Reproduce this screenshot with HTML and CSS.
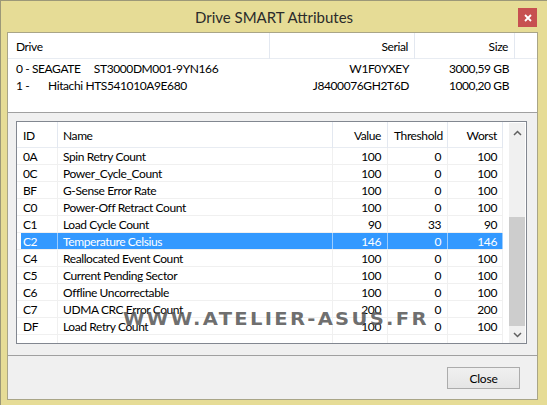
FILE: index.html
```html
<!DOCTYPE html>
<html lang="en">
<head>
  <meta charset="UTF-8">
  <title>Drive SMART Attributes</title>
  <link rel="stylesheet" href="styles.css">
</head>
<body>
  <div class="window">
    <div class="titlebar">
      <div></div>
      <div class="title">Drive SMART Attributes</div>
      <div class="close-x">
        <svg width="8" height="8" viewBox="0 0 8 8"><path d="M1 1 L7 7 M7 1 L1 7" stroke="#fff" stroke-width="1.8" fill="none"/></svg>
      </div>
    </div>

    <div class="client">
      <div class="main">
        <div class="drives">
          <div class="drv-head">
            <div class="dh">Drive</div>
            <div class="dh right">Serial</div>
            <div class="dh right">Size</div>
            <div class="dh last"></div>
          </div>
          <div class="drv-row">
            <div class="dc pre">0 - SEAGATE     ST3000DM001-9YN166</div>
            <div class="dc right">W1F0YXEY</div>
            <div class="dc right">3000,59 GB</div>
          </div>
          <div class="drv-row">
            <div class="dc pre">1 -       Hitachi HTS541010A9E680</div>
            <div class="dc right">J8400076GH2T6D</div>
            <div class="dc right">1000,20 GB</div>
          </div>
        </div>

        <div class="smart-wrap">
          <div class="smart">
            <div class="grid">
              <div class="row head">
                <div class="c">ID</div>
                <div class="c">Name</div>
                <div class="c num">Value</div>
                <div class="c num">Threshold</div>
                <div class="c num">Worst</div>
              </div>
              <div class="row"><div class="c">0A</div><div class="c">Spin Retry Count</div><div class="c num">100</div><div class="c num">0</div><div class="c num">100</div></div>
              <div class="row"><div class="c">0C</div><div class="c">Power_Cycle_Count</div><div class="c num">100</div><div class="c num">0</div><div class="c num">100</div></div>
              <div class="row"><div class="c">BF</div><div class="c">G-Sense Error Rate</div><div class="c num">100</div><div class="c num">0</div><div class="c num">100</div></div>
              <div class="row"><div class="c">C0</div><div class="c">Power-Off Retract Count</div><div class="c num">100</div><div class="c num">0</div><div class="c num">100</div></div>
              <div class="row"><div class="c">C1</div><div class="c">Load Cycle Count</div><div class="c num">90</div><div class="c num">33</div><div class="c num">90</div></div>
              <div class="row sel"><div class="c">C2</div><div class="c">Temperature Celsius</div><div class="c num">146</div><div class="c num">0</div><div class="c num">146</div></div>
              <div class="row"><div class="c">C4</div><div class="c">Reallocated Event Count</div><div class="c num">100</div><div class="c num">0</div><div class="c num">100</div></div>
              <div class="row"><div class="c">C5</div><div class="c">Current Pending Sector</div><div class="c num">100</div><div class="c num">0</div><div class="c num">100</div></div>
              <div class="row"><div class="c">C6</div><div class="c">Offline Uncorrectable</div><div class="c num">100</div><div class="c num">0</div><div class="c num">100</div></div>
              <div class="row"><div class="c">C7</div><div class="c">UDMA CRC Error Count</div><div class="c num">200</div><div class="c num">0</div><div class="c num">200</div></div>
              <div class="row"><div class="c">DF</div><div class="c">Load Retry Count</div><div class="c num">100</div><div class="c num">0</div><div class="c num">100</div></div>
              <div class="row rest"><div class="c"></div><div class="c"></div><div class="c"></div><div class="c"></div><div class="c"></div></div>
            </div>
            <div class="scrollbar">
              <div class="sb-btn up">
                <svg width="9" height="6" viewBox="0 0 9 6"><path d="M1 5 L4.5 1.5 L8 5" stroke="#606060" stroke-width="1.5" fill="none"/></svg>
              </div>
              <div class="sb-track"><div class="sb-thumb"></div></div>
              <div class="sb-btn down">
                <svg width="9" height="6" viewBox="0 0 9 6"><path d="M1 1 L4.5 4.5 L8 1" stroke="#606060" stroke-width="1.5" fill="none"/></svg>
              </div>
            </div>
          </div>
        </div>
      </div>

      <div class="footer">
        <button class="close-btn">Close</button>
      </div>
    </div>

    <div class="watermark">WWW.ATELIER-ASUS.FR</div>
  </div>
</body>
</html>
```

FILE: styles.css
```css
body {
  margin: 0;
  background-color: #e6dc96;
  font-family: 'Lato', 'Liberation Sans', sans-serif;
  font-size: 12px;
  letter-spacing: -0.4px;
  color: #000;
}
.window {
  position: relative;
  width: 547px;
  height: 405px;
  box-sizing: border-box;
  border-left: 1px solid #9c9878;
  border-top: 1px solid #9c9878;
  background-color: #e6dc96;
  display: flex;
  flex-direction: column;
  overflow: hidden;
}
.titlebar {
  height: 31px;
  display: grid;
  grid-template-columns: 1fr auto 1fr;
}
.title {
  font-size: 15px;
  letter-spacing: 0;
  color: #2b2b2b;
  line-height: 31px;
  padding-top: 1px;
}
.close-x {
  justify-self: end;
  width: 19px;
  height: 19px;
  margin-top: 7px;
  margin-right: 10px;
  background-color: #c75050;
  display: flex;
  align-items: center;
  justify-content: center;
}
.close-x svg {
  display: block;
}
.client {
  margin: 0 9px 5px 6px;
  height: 368px;
  box-sizing: border-box;
  border: 1px solid #a9a587;
  background-color: #f0f0f0;
  display: flex;
  flex-direction: column;
}
.main {
  height: 323px;
  box-sizing: border-box;
  border-bottom: 1px solid #a0a0a0;
  display: flex;
  flex-direction: column;
}

/* drive list */
.drives {
  height: 80px;
  box-sizing: border-box;
  background-color: #fff;
  border-bottom: 1px solid #a0a0a0;
}
.drv-head, .drv-row {
  display: grid;
  grid-template-columns: 262px 145px 100px 22px;
}
.drv-head {
  height: 26px;
  box-sizing: border-box;
  border-bottom: 1px solid #e8ecf2;
  margin-bottom: 1px;
}
.dh {
  line-height: 25px;
  padding: 1px 6px 0 8px;
  border-right: 1px solid #e3e8f0;
}
.dh.last {
  border-right: none;
}
.drv-row {
  height: 17px;
  line-height: 17px;
}
.dc {
  padding: 0 6px 0 8px;
  white-space: nowrap;
}
.right {
  text-align: right;
}
.pre {
  white-space: pre;
}

/* smart attributes list */
.smart-wrap {
  padding: 8px 10px 11px 8px;
}
.smart {
  height: 223px;
  box-sizing: border-box;
  border: 1px solid #828790;
  background-color: #fff;
  display: flex;
}
.grid {
  width: 492px;
  display: flex;
  flex-direction: column;
}
.row {
  width: 486px;
  height: 17px;
  box-sizing: border-box;
  border-bottom: 1px solid #f0f0f0;
  display: grid;
  grid-template-columns: 41px 275px 55px 60px 55px;
  line-height: 15px;
}
.row.head {
  height: 26px;
  line-height: 24px;
  border-bottom: 1px solid #e8ecf2;
}
.row.rest {
  flex: 1;
  border-bottom: none;
}
.c {
  padding: 1px 6px 0;
  border-right: 1px solid #f0f0f0;
  white-space: nowrap;
}
.c:first-child {
  padding-left: 6px;
}
.c:nth-child(2) {
  padding-left: 5px;
}
.head .c {
  border-right-color: #e3e8f0;
  padding-top: 2px;
}
.num {
  text-align: right;
}
.num:last-child {
  padding-right: 5px;
}
.row.sel {
  background-color: #3399ff;
  color: #fff;
}
.row.sel .c {
  border-right-color: #9ccdff;
}
.row.sel .c:first-child {
  background: linear-gradient(to right, #fff 4px, #3399ff 4px);
}

/* scrollbar */
.scrollbar {
  width: 17px;
  padding: 1px 1px 0 0;
  display: flex;
  flex-direction: column;
  box-sizing: border-box;
}
.sb-btn {
  background-color: #f0f0f0;
  display: flex;
  align-items: center;
  justify-content: center;
}
.sb-btn.up {
  height: 20px;
}
.sb-btn.down {
  height: 17px;
}
.sb-track {
  flex: 1;
  background-color: #f0f0f0;
  display: flex;
  flex-direction: column;
}
.sb-thumb {
  margin-top: 74px;
  flex: 1;
  background-color: #cdcdcd;
}

/* footer */
.footer {
  flex: 1;
  display: flex;
  justify-content: flex-end;
  align-items: flex-start;
  padding: 11px 17px 0 0;
}
.close-btn {
  width: 73px;
  height: 22px;
  font-family: 'Lato', 'Liberation Sans', sans-serif;
  font-size: 12px;
  letter-spacing: -0.2px;
  color: #000;
  border: 1px solid #acacac;
  background: linear-gradient(#f0f0f0, #e5e5e5);
  padding: 0;
}

.watermark {
  position: absolute;
  left: 122px;
  top: 308px;
  font-family: 'DejaVu Sans', sans-serif;
  font-weight: bold;
  font-size: 17px;
  letter-spacing: 2px;
  color: rgba(85, 85, 85, 0.85);
  transform-origin: left top;
  transform: scaleX(1.15);
  white-space: nowrap;
}
```
